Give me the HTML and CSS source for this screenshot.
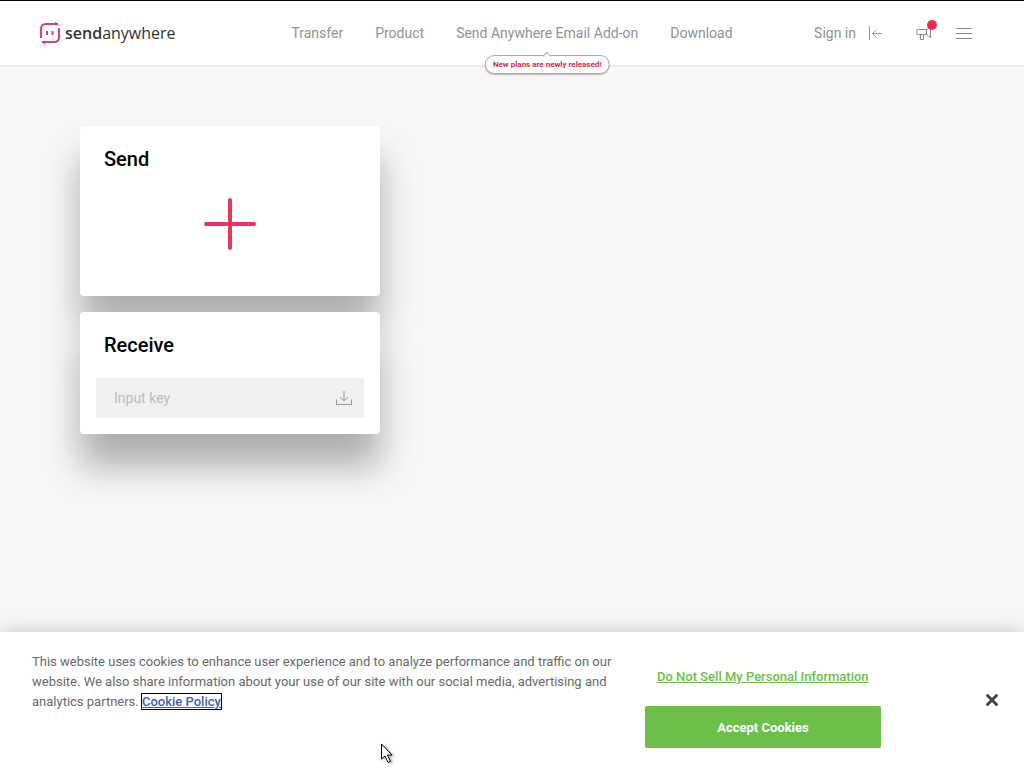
FILE: index.html
```html
<!DOCTYPE html>
<html lang="en">
<head>
  <meta charset="UTF-8">
  <meta name="viewport" content="width=device-width, initial-scale=1">
  <title>Send Anywhere</title>
  <link rel="stylesheet" href="styles.css">
</head>
<body>
  <header class="header">
    <a class="logo" href="#">
      <svg class="logo-mark" width="20" height="24" viewBox="0 0 20 24" fill="none" stroke="#e0406a" stroke-width="2">
        <path d="M1 17V8q0-5 5-5h12M19 7v9q0 5-5 5H2"/>
        <path d="M15 .5L19 4H15zM5 23.500L1 20H5z" fill="#e0406a" stroke="none"/>
        <path d="M7 10v4M12.500 10v4"/>
      </svg>
      <span class="logo-text"><b>send</b>anywhere</span>
    </a>
    <nav class="nav">
      <a href="#">Transfer</a>
      <a href="#">Product</a>
      <a class="has-tip" href="#">Send Anywhere Email Add-on
        <span class="tip">New plans are newly released!</span>
      </a>
      <a href="#">Download</a>
    </nav>
    <div class="tools">
      <a class="signin" href="#">Sign in
        <svg width="14" height="14" viewBox="0 0 14 14" fill="none" stroke="#999">
          <path d="M1.500 0v14M4.500 7.500H14M8.500 3.500l-4 4 4 4"/>
        </svg>
      </a>
      <button class="icon-button notice" type="button" aria-label="Notices">
        <svg width="16" height="16" viewBox="0 0 16 16" fill="none" stroke="#888">
          <path d="M10.500 4.500h-8q-2 0-2 2v1q0 2 2 2h8l4 3V2.500l-4 2zM10.500 4.500v5M4.500 9.500v5h3v-5"/>
        </svg>
        <span class="dot"></span>
      </button>
      <button class="icon-button" type="button" aria-label="Menu">
        <svg width="16" height="14" viewBox="0 0 16 14" stroke="#888">
          <path d="M0 2.500h16M0 7.500h16M0 12.500h16"/>
        </svg>
      </button>
    </div>
  </header>

  <main class="main">
    <section class="card send">
      <h2>Send</h2>
      <button class="icon-button add" type="button" aria-label="Add files">
        <svg width="52" height="52" viewBox="0 0 52 52" stroke="#eb3659" stroke-width="4" stroke-linecap="round">
          <path d="M2 26h48M26 2v48"/>
        </svg>
      </button>
    </section>
    <section class="card receive">
      <h2>Receive</h2>
      <form class="key-form">
        <input type="text" placeholder="Input key" aria-label="Input key">
        <button class="icon-button" type="button" aria-label="Receive">
          <svg width="16" height="16" viewBox="0 0 16 16" fill="none" stroke="#999">
            <path d="M.5 9.500v5h15v-5M8 1v9.500M4 7l4 4 4-4"/>
          </svg>
        </button>
      </form>
    </section>
  </main>

  <div class="cookies">
    <p class="cookies-text">
      This website uses cookies to enhance user experience and to analyze
      performance and traffic on our website. We also share information about
      your use of our site with our social media, advertising and analytics
      partners. <a class="policy" href="#">Cookie Policy</a>
    </p>
    <div class="cookies-actions">
      <button class="do-not-sell" type="button">Do Not Sell My Personal Information</button>
      <button class="accept" type="button">Accept Cookies</button>
    </div>
    <button class="icon-button close" type="button" aria-label="Close">
      <svg width="14" height="14" viewBox="0 0 14 14" stroke="#444" stroke-width="3" stroke-linecap="round">
        <path d="M2.500 2.500l9 9M11.500 2.500l-9 9"/>
      </svg>
    </button>
  </div>

  <svg class="cursor" width="14" height="21" viewBox="0 0 14 21" fill="#fff" stroke="#000">
    <path d="M.5 1v15l3.500-3 3 6.500 2.500-1-3-6.500H11z"/>
  </svg>
</body>
</html>
```

FILE: styles.css
```css
* {
  box-sizing: border-box;
}
body {
  background: #f7f7f7;
  display: flex;
  flex-direction: column;
  font-family: Roboto, "Liberation Sans", sans-serif;
  margin: 0;
  min-height: 100vh;
}
svg {
  display: block;
}
a {
  color: inherit;
  text-decoration: none;
}
button, input {
  background: none;
  border: 0;
  font-family: inherit;
  padding: 0;
}
.icon-button {
  cursor: pointer;
  position: relative;
}

/* header */
.header {
  align-items: center;
  background: #fff;
  border-bottom: 2px solid #ebebeb;
  border-top: 1px solid #000;
  color: #929292;
  display: grid;
  font-size: 14px;
  grid-template-columns: 1fr auto 1fr;
  height: 67px;
  line-height: 20px;
  padding: 0 40px;
}
.logo {
  align-items: center;
  color: #333;
  display: flex;
  gap: 5px;
}
.logo-text {
  font-family: "Open Sans", "Noto Sans", sans-serif;
  font-size: 16px;
}
.logo-text b {
  font-weight: 600;
}
.nav {
  display: flex;
  gap: 32px;
}
.has-tip {
  position: relative;
}
.tip {
  background: #fff;
  border: 1px solid #aaa;
  border-radius: 10px;
  box-shadow: 0 1px 1px #bbb;
  color: #d8284f;
  font-size: 8px;
  font-weight: bold;
  left: 50%;
  line-height: 17px;
  padding: 0 7px;
  position: absolute;
  top: 32px;
  transform: translateX(-50%);
  white-space: nowrap;
}
.tip::before {
  background: #fff;
  border: solid #aaa;
  border-width: 1px 0 0 1px;
  content: "";
  height: 5px;
  left: 50%;
  position: absolute;
  top: -3px;
  transform: translateX(-50%) rotate(45deg);
  width: 5px;
}
.tools {
  align-items: center;
  display: flex;
  gap: 24px;
  justify-content: flex-end;
  padding-right: 12px;
}
.signin {
  align-items: center;
  display: flex;
  gap: 12px;
  margin-right: 10px;
}
.dot {
  background: #f82a55;
  border-radius: 50%;
  height: 10px;
  position: absolute;
  right: -5px;
  top: -5px;
  width: 10px;
}

/* send and receive cards */
.main {
  display: flex;
  flex: 1;
  flex-direction: column;
  gap: 16px;
  padding: 59px 80px;
}
.card {
  background: #fff;
  border-radius: 4px;
  box-shadow: 0 32px 36px rgba(0, 0, 0, .3);
  max-width: 300px;
  padding: 20px 16px 16px;
}
.card h2 {
  font-size: 20px;
  font-weight: 500;
  line-height: 26px;
  margin: 0;
  padding: 0 8px;
}
.send {
  padding-bottom: 46px;
}
.add {
  display: block;
  margin: 26px auto 0;
}
.key-form {
  align-items: center;
  background: #f0f0f0;
  display: flex;
  height: 40px;
  margin-top: 20px;
  padding: 0 12px 0 18px;
}
.key-form input {
  flex: 1;
  font-size: 14px;
  min-width: 0;
}
.key-form input::placeholder {
  color: #bdbdbd;
}

/* cookie banner */
.cookies {
  background: #fff;
  box-shadow: 0 0 18px rgba(0, 0, 0, .2);
  display: flex;
  font-size: 13px;
  min-height: 136px;
  padding: 20px 25px 20px 32px;
}
.cookies-text {
  color: #696969;
  flex: 1;
  line-height: 20px;
  margin: 0;
  max-width: 588px;
}
.policy {
  color: #3860be;
  font-weight: 500;
  outline: 1px solid #000;
  text-decoration: underline;
}
.cookies-actions {
  display: flex;
  flex-direction: column;
  gap: 19px;
  margin-left: 25px;
  width: 236px;
}
.do-not-sell, .accept {
  cursor: pointer;
  font-size: 13px;
}
.do-not-sell {
  color: #6cc04a;
  font-weight: 500;
  line-height: 20px;
  margin-top: 15px;
  padding: 0 12px;
  text-align: left;
  text-decoration: underline;
  white-space: nowrap;
}
.accept {
  background: #6cc04a;
  border-radius: 2px;
  color: #fff;
  font-weight: bold;
  height: 42px;
  padding: 0 12px;
}
.close {
  align-self: center;
  margin-left: auto;
}

.cursor {
  filter: drop-shadow(2px 1px 1px rgba(0, 0, 0, .3));
  left: 381px;
  position: absolute;
  top: 743px;
}
```
